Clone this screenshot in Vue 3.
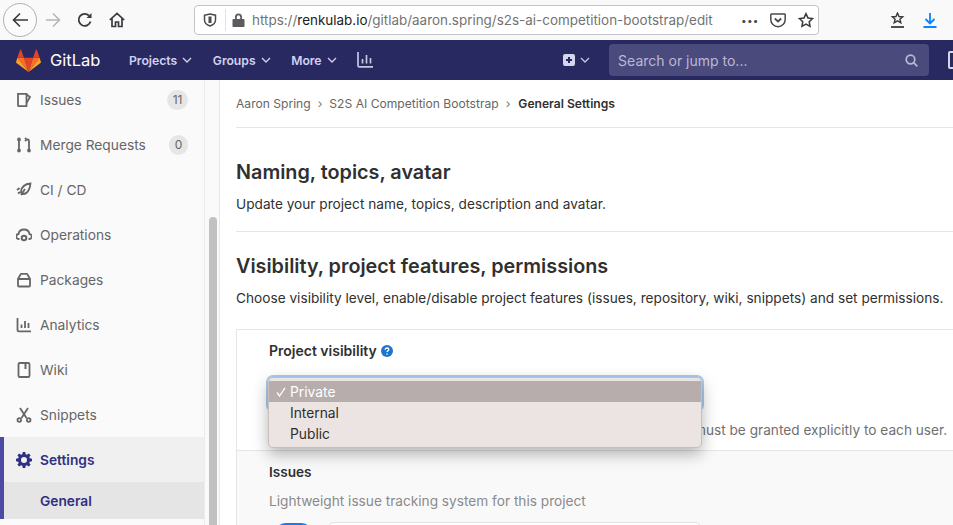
<template>
  <div class="page">
    <!-- browser toolbar -->
    <div class="toolbar">
      <div class="nav-btns">
        <button class="round-btn">
          <svg width="17" height="16" viewBox="0 0 17 16" fill="none" stroke="#3a3a3e" stroke-width="1.6"><path d="M16 8H1.500M8 1.500 1.500 8 8 14.500"/></svg>
        </button>
        <svg class="fwd" width="16" height="16" viewBox="0 0 16 16" fill="none" stroke="#b5b5b8" stroke-width="1.5"><path d="M1 8h13.500M8 1.500 14.500 8 8 14.500"/></svg>
        <svg class="reload" width="16" height="16" viewBox="0 0 16 16" fill="none" stroke="#3a3a3e" stroke-width="1.8"><path d="M13.500 9.500A6 6 0 1 1 12 3.600"/><path d="M14.500 1v5h-5" fill="#3a3a3e" stroke="none"/></svg>
        <svg class="home" width="16" height="16" viewBox="0 0 16 16" fill="none" stroke="#3a3a3e" stroke-width="1.7"><path d="M.8 8 8 1.300 15.200 8M3 6.500V14.500h3.500V10h3v4.500H13V6.500"/></svg>
      </div>
      <div class="urlbar">
        <svg class="shield" width="14" height="14" viewBox="0 0 14 14" fill="none" stroke="#4a4a4f" stroke-width="1.5"><path d="M1.500 2.200 7 1l5.500 1.200V7c0 3-2.500 5-5.500 6-3-1-5.500-3-5.500-6z"/><path d="M7 3.500v6.500" stroke-width="3"/></svg>
        <span class="sep"></span>
        <svg class="lock" width="13" height="14" viewBox="0 0 13 14"><path d="M3 6V4a3.500 3.500 0 0 1 7 0v2h1.500c.5 0 1 .4 1 1v6c0 .6-.5 1-1 1h-10c-.5 0-1-.4-1-1V7c0-.6.5-1 1-1zm1.800 0h3.400V4a1.700 1.700 0 0 0-3.400 0z" fill="#5b5b60"/></svg>
        <span class="url">https://<b>renkulab.io</b>/gitlab/aaron.spring/s2s-ai-competition-bootstrap/edit</span>
        <span class="dots">•••</span>
        <svg class="pocket" width="16" height="15" viewBox="0 0 16 15" fill="none" stroke="#4a4a4f" stroke-width="1.5"><path d="M1.500 1h13c.4 0 .7.3.7.7V6.500a7.200 7.200 0 0 1-14.400 0V1.700c0-.4.300-.7.700-.7z"/><path d="M4.800 5.500 8 8.500l3.200-3" stroke-width="1.8"/></svg>
        <svg class="star" width="16" height="16" viewBox="0 0 17 16" fill="none" stroke="#3a3a3e" stroke-width="1.6"><path d="M8.500 1.300 10.600 5.800l4.900.6-3.600 3.400.9 4.900-4.300-2.400-4.300 2.400.9-4.900L1.500 6.400l4.900-.6z"/></svg>
      </div>
      <svg class="library" width="15" height="16" viewBox="0 0 15 16" fill="none" stroke="#3a3a3e" stroke-width="1.4"><path d="M7.500 1 9 4.500l3.700.3-2.800 2.400.9 3.600-3.300-2-3.300 2 .9-3.600L2.300 4.800 6 4.500z"/><path d="M1 15h13" stroke-width="1.8"/></svg>
      <svg class="download" width="14" height="15" viewBox="0 0 14 15" fill="none" stroke="#0a84ff" stroke-width="1.8"><path d="M7 0v10M2.500 6 7 10.500 11.500 6M.5 14h13"/></svg>
    </div>

    <!-- gitlab navbar -->
    <div class="navbar">
      <svg class="logo" width="25" height="23" viewBox="0 0 25 23">
        <path d="M12.500 23 17.100 8.800H7.900z" fill="#e24329"/>
        <path d="M12.500 23 7.900 8.800H1.400z" fill="#fc6d26"/>
        <path d="M1.400 8.800.1 13c-.1.400 0 .8.400 1L12.500 23z" fill="#fca326"/>
        <path d="M1.400 8.800H7.900L5.100.7c-.1-.4-.7-.4-.9 0z" fill="#e24329"/>
        <path d="M12.500 23 17.100 8.800h6.500z" fill="#fc6d26"/>
        <path d="M23.600 8.800 24.900 13c.1.400 0 .8-.4 1L12.500 23z" fill="#fca326"/>
        <path d="M23.600 8.800H17.100L19.900.7c.1-.4.700-.4.900 0z" fill="#e24329"/>
      </svg>
      <span class="brand">GitLab</span>
      <div class="menu">
        <span v-for="m in topMenu" :key="m" class="menu-item">
          {{ m }}
          <svg width="10" height="6" viewBox="0 0 10 6" fill="none" stroke="currentColor" stroke-width="1.3"><path d="M1 1l4 4 4-4"/></svg>
        </span>
        <svg class="chart" width="16" height="16" viewBox="0 0 16 16" fill="none" stroke="#c5c5e4" stroke-width="1.7"><path d="M1 0v13.500c0 .8.500 1.400 1.300 1.400H16M5.500 7v4.500M9.500 3v8.500M13.500 6v5.500"/></svg>
      </div>
      <div class="plus">
        <svg width="12" height="12" viewBox="0 0 12 12"><path d="M2 0h8a2 2 0 0 1 2 2v8a2 2 0 0 1-2 2H2a2 2 0 0 1-2-2V2a2 2 0 0 1 2-2zm3 3v2H3v2h2v2h2V7h2V5H7V3z" fill="#d5d5ee" fill-rule="evenodd"/></svg>
        <svg width="10" height="6" viewBox="0 0 10 6" fill="none" stroke="#c5c5e4" stroke-width="1.3"><path d="M1 1l4 4 4-4"/></svg>
      </div>
      <div class="search">
        <span>Search or jump to...</span>
        <svg width="13" height="13" viewBox="0 0 13 13" fill="none" stroke="#b9b9d6" stroke-width="1.7"><circle cx="5.500" cy="5.500" r="4.300"/><path d="M8.700 8.700 12.300 12.300"/></svg>
      </div>
      <span class="cut-icon"></span>
    </div>

    <div class="body">
      <!-- left sidebar -->
      <aside class="sidebar">
        <div class="side-list">
          <div v-for="item in sideItems" :key="item.label" class="side-item">
            <svg class="side-icon" width="16" height="16" viewBox="0 0 16 16" fill="none" stroke="#666" stroke-width="1.8" v-html="item.icon"></svg>
            <span class="side-label">{{ item.label }}</span>
            <span v-if="item.count" class="count">{{ item.count }}</span>
          </div>
          <div class="side-item active">
            <svg class="side-icon" width="16" height="16" viewBox="0 0 16 16"><path d="M6.700 0h2.600l.4 2.200 1.200.5 1.900-1.300 1.800 1.800-1.300 1.900.5 1.200 2.200.4v2.600l-2.200.4-.5 1.200 1.300 1.900-1.800 1.800-1.900-1.300-1.200.5-.4 2.200H6.700l-.4-2.200-1.200-.5-1.900 1.300-1.800-1.800 1.300-1.900-.5-1.200L0 9.300V6.700l2.200-.4.500-1.200L1.400 3.200l1.800-1.800 1.900 1.300 1.200-.5zM8 5a3 3 0 1 0 0 6 3 3 0 0 0 0-6z" fill="#303082" fill-rule="evenodd"/></svg>
            <span class="side-label">Settings</span>
          </div>
          <div class="side-sub">General</div>
        </div>
        <div class="scroll-track"><div class="scroll-thumb"></div></div>
      </aside>

      <!-- main content -->
      <main class="main">
        <div class="crumbs">
          <span>Aaron Spring</span><i>›</i>
          <span>S2S AI Competition Bootstrap</span><i>›</i>
          <b>General Settings</b>
        </div>
        <section class="block first">
          <h4>Naming, topics, avatar</h4>
          <p>Update your project name, topics, description and avatar.</p>
        </section>
        <section class="block second">
          <h4>Visibility, project features, permissions</h4>
          <p>Choose visibility level, enable/disable project features (issues, repository, wiki, snippets) and set permissions.</p>
        </section>
        <div class="panel">
          <div class="visibility">
            <div class="vis-label">
              Project visibility
              <svg width="12" height="12" viewBox="0 0 12 12"><circle cx="6" cy="6" r="6" fill="#1f75cb"/><path d="M4.200 4.700C4.200 3.700 5 3 6 3s1.800.6 1.800 1.500c0 1.300-1.800 1.300-1.800 2.600" fill="none" stroke="#fff" stroke-width="1.3"/><circle cx="6" cy="9" r=".8" fill="#fff"/></svg>
            </div>
            <div class="select-wrap">
              <div class="dropdown">
                <div class="opt selected">
                  <svg class="tick" width="10" height="10" viewBox="0 0 10 10" fill="none" stroke="#fff" stroke-width="1.3"><path d="M1 5.500 3.500 9 9 .8"/></svg>
                  Private
                </div>
                <div class="opt">Internal</div>
                <div class="opt">Public</div>
              </div>
            </div>
            <div class="hint">The project is accessible only by members of the project. Access must be granted explicitly to each user.</div>
          </div>
          <div class="issues">
            <div class="iss-title">Issues</div>
            <div class="iss-desc">Lightweight issue tracking system for this project</div>
            <div class="iss-row">
              <span class="toggle"></span>
              <span class="fake-select"></span>
            </div>
          </div>
        </div>
      </main>
    </div>
  </div>
</template>

<script setup>
const topMenu = ['Projects', 'Groups', 'More']

const sideItems = [
  { label: 'Issues', count: '11', icon: '<path d="M2 1.800h8.500v12.400H3a1 1 0 0 1-1-1z"/><path d="M10.500 2.500 14 5l-3.500 6"/>' },
  { label: 'Merge Requests', count: '0', icon: '<path d="M3 4v8M10.500 2.500h1c1 0 1.500.5 1.500 1.500v8M10.500 2.500 9 1M10.500 2.500 9 4"/><circle cx="3" cy="2.500" r="1"/><circle cx="3" cy="13.500" r="1"/><circle cx="13" cy="13.500" r="1"/>' },
  { label: 'CI / CD', count: '', icon: '<path d="M14.500 1.500C9 2 5.500 5 5 9.500c0 1.500 1 2.500 2.500 2.500 4 0 6.500-5 7-10.500zM5 13l4-6M1 8l2.500-2M2 11.500 4 10"/>' },
  { label: 'Operations', count: '', icon: '<path d="M3.500 12H3a2.500 2.500 0 0 1-.5-5C3 4 5.500 2.500 8 2.500S13 4 13.500 7a2.500 2.500 0 0 1-.5 5h-.5"/><circle cx="8" cy="11" r="2.300" stroke-width="2"/>' },
  { label: 'Packages', count: '', icon: '<path d="M2 7h12v6.500a1 1 0 0 1-1 1H3a1 1 0 0 1-1-1zM2 7l2.500-4.500c.2-.4.500-.7 1-.7h5c.5 0 .8.300 1 .7L14 7"/>' },
  { label: 'Analytics', count: '', icon: '<path d="M1.500 1v12c0 .8.500 1.300 1.300 1.300H15M5.500 7.500V11M9 4v7M12.500 6v5"/>' },
  { label: 'Wiki', count: '', icon: '<rect x="2.500" y="1" width="11" height="14" rx="1.300"/><path d="M9.500 1v6" stroke-width="2"/>' },
  { label: 'Snippets', count: '', icon: '<path d="M4 1l6.500 10M12 1 5.500 11"/><circle cx="3.300" cy="13" r="1.800"/><circle cx="12.700" cy="13" r="1.800"/>' }
]
</script>

<style scoped>
.page {
  width: 953px;
  height: 525px;
  overflow: hidden;
  display: flex;
  flex-direction: column;
  font-family: Inter, "Liberation Sans", sans-serif;
  color: #303030;
  background: #fff;
}
.toolbar {
  height: 40px;
  flex: none;
  background: #f9f9fa;
  display: flex;
  align-items: center;
  padding-left: 3px;
  box-sizing: border-box;
}
.nav-btns {
  display: flex;
  align-items: center;
  width: 191px;
}
.round-btn {
  width: 34px;
  height: 34px;
  border-radius: 50%;
  border: 1px solid #b1b1b3;
  background: #fbfbfb;
  padding: 0;
  display: flex;
  align-items: center;
  justify-content: center;
}
.fwd { margin-left: 8px; }
.reload { margin-left: 16px; }
.home { margin-left: 16px; }
.urlbar {
  width: 625px;
  height: 30px;
  box-sizing: border-box;
  border: 1px solid #c4c4c6;
  border-radius: 4px;
  background: #fff;
  display: flex;
  align-items: center;
  padding-left: 8px;
  font-size: 13.45px;
  color: #737373;
  white-space: nowrap;
}
.sep {
  width: 1px;
  height: 22px;
  background: #e2e2e4;
  margin: 0 6px 0 8px;
}
.url {
  margin-left: 7px;
  width: 462px;
  overflow: hidden;
}
.url b { font-weight: 400; color: #1a1a1a; }
.dots {
  font-size: 10px;
  color: #4a4a4f;
  margin-left: 27px;
  letter-spacing: 0.3px;
}
.pocket { margin-left: 11px; }
.star { margin-left: 12px; }
.library { margin-left: 71px; }
.download { margin-left: 18px; }

.navbar {
  height: 40px;
  flex: none;
  background: #292961;
  display: flex;
  align-items: center;
  padding-left: 16px;
  box-sizing: border-box;
  position: relative;
}
.logo { flex: none; }
.brand {
  color: #fff;
  font-size: 16.5px;
  margin-left: 9px;
  width: 79px;
  flex: none;
}
.menu {
  display: flex;
  align-items: center;
  flex: none;
  color: #d1d1f0;
  font-size: 12.2px;
  font-weight: 600;
}
.menu-item {
  display: flex;
  align-items: center;
  gap: 5px;
  margin-right: 20.5px;
}
.plus {
  display: flex;
  align-items: center;
  flex: none;
  gap: 5px;
  margin-left: 190px;
}
.search {
  width: 320px;
  height: 32px;
  flex: none;
  margin-left: 19px;
  background: #4a4a7d;
  border-radius: 4px;
  display: flex;
  align-items: center;
  justify-content: space-between;
  padding: 0 11px 0 9px;
  box-sizing: border-box;
  color: #b9b9d6;
  font-size: 14px;
}
.cut-icon {
  width: 12px;
  height: 14px;
  margin-left: 19px;
  border: 2px solid #d5d5ee;
  border-radius: 2px;
  flex: none;
}

.body {
  flex: 1;
  display: flex;
  min-height: 0;
}
.sidebar {
  width: 220px;
  flex: none;
  display: flex;
  box-sizing: border-box;
  border-right: 1px solid #e8e8e8;
  background: #fafafa;
  overflow: hidden;
}
.side-list {
  width: 205px;
  flex: none;
  box-sizing: border-box;
  border-right: 1px solid #ececec;
  margin-top: -3px;
}
.side-item {
  height: 45px;
  display: flex;
  align-items: center;
  padding: 0 16px;
  font-size: 13.75px;
  color: #666;
  box-sizing: border-box;
}
.side-icon { flex: none; margin-right: 8px; }
.side-label { flex: 1; }
.count {
  min-width: 8px;
  height: 20px;
  padding: 0 5.5px;
  border-radius: 10px;
  background: #e6e6e6;
  color: #666;
  font-size: 12px;
  line-height: 20px;
  text-align: center;
}
.side-item.active {
  background: #f0f0f0;
  color: #303082;
  font-weight: 600;
  border-left: 4px solid #4b4ba3;
  padding-left: 12px;
}
.side-sub {
  height: 37px;
  line-height: 39px;
  background: #e5e5e5;
  border-left: 4px solid #4b4ba3;
  padding-left: 36px;
  color: #303082;
  font-size: 13.75px;
  font-weight: 600;
}
.scroll-track {
  flex: 1;
  padding: 137px 2px 0 4px;
}
.scroll-thumb {
  height: 400px;
  background: #c1c1c1;
  border-radius: 4px 4px 0 0;
}

.main {
  flex: 1;
  min-width: 0;
  padding-left: 16px;
  overflow: hidden;
}
.crumbs {
  height: 48px;
  box-sizing: border-box;
  border-bottom: 1px solid #e5e5e5;
  display: flex;
  align-items: center;
  font-size: 12.1px;
  color: #666;
  white-space: nowrap;
}
.crumbs i {
  font-style: normal;
  margin: 0 7px;
  color: #777;
}
.crumbs b { color: #303030; font-weight: 600; margin-left: 1px; }
.block {
  box-sizing: border-box;
  border-bottom: 1px solid #e5e5e5;
}
.block h4 {
  margin: 0;
  font-size: 19.8px;
  font-weight: 600;
  line-height: 24px;
  color: #303030;
  white-space: nowrap;
}
.block p {
  margin: 12px 0 0;
  font-size: 13.66px;
  line-height: 16px;
  color: #303030;
  white-space: nowrap;
}
.block.first {
  height: 104px;
  padding-top: 32px;
}
.block.second {
  height: 97px;
  padding-top: 22px;
  border-bottom: none;
}
.panel {
  border-top: 1px solid #e5e5e5;
  border-left: 1px solid #e5e5e5;
  margin-right: -20px;
}
.visibility {
  height: 121px;
  box-sizing: border-box;
  padding: 13px 26px 0 32px;
  border-bottom: 1px solid #e5e5e5;
}
.vis-label {
  display: flex;
  align-items: center;
  gap: 4px;
  font-size: 14px;
  font-weight: 600;
  line-height: 16px;
  color: #303030;
}
.select-wrap {
  height: 33px;
  width: 434px;
  margin: 18px 0 0 -1px;
  border-radius: 5px;
  box-shadow: 0 0 0 2px #a9cdf2;
  position: relative;
}
.dropdown {
  position: absolute;
  left: 0;
  top: 0;
  width: 100%;
  box-sizing: border-box;
  padding: 3px 0;
  background: #ece4e2;
  border: 1px solid #c6bfbe;
  border-radius: 5px;
  box-shadow: 0 6px 16px rgba(0, 0, 0, 0.3);
  z-index: 2;
  overflow: hidden;
}
.opt {
  height: 21px;
  line-height: 23px;
  padding-left: 21px;
  font-size: 13.8px;
  color: #2e2e2e;
  position: relative;
}
.opt.selected {
  background: #b6adac;
  color: #fff;
}
.tick {
  position: absolute;
  left: 7px;
  top: 6px;
}
.hint {
  margin-top: 12px;
  font-size: 13.66px;
  line-height: 16px;
  color: #707070;
  white-space: nowrap;
  text-align: right;
}
.issues {
  background: #f9f9f9;
  height: 100px;
  padding: 13px 0 0 32px;
  box-sizing: border-box;
}
.iss-title {
  font-size: 13.6px;
  font-weight: 600;
  line-height: 16px;
  color: #303030;
}
.iss-desc {
  margin-top: 13px;
  font-size: 13.66px;
  line-height: 16px;
  color: #8a8a8a;
}
.iss-row {
  margin-top: 13px;
  display: flex;
  gap: 16px;
  margin-left: 5px;
}
.toggle {
  width: 39px;
  height: 24px;
  margin-top: 1px;
  border-radius: 12px;
  background: #1f78f0;
}
.fake-select {
  width: 371px;
  height: 34px;
  box-sizing: border-box;
  background: #fff;
  border: 1px solid #e0e0e0;
  border-radius: 4px;
}
</style>

<style>
html, body {
  margin: 0;
  overflow: hidden;
}
</style>
